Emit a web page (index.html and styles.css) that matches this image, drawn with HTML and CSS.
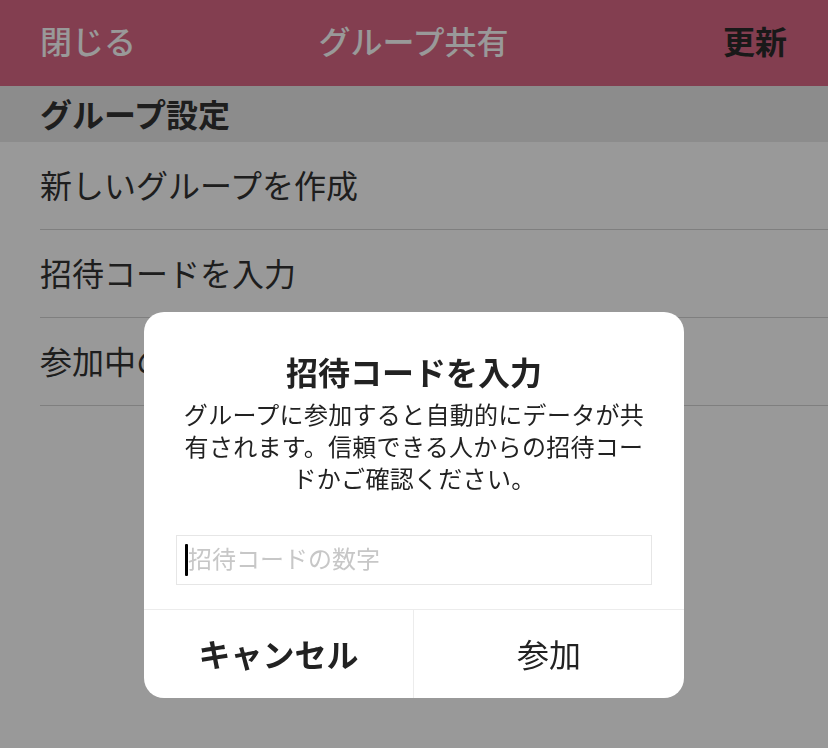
FILE: index.html
```html
<!DOCTYPE html>
<html lang="ja">
<head>
    <meta charset="UTF-8">
    <meta name="viewport" content="width=device-width, initial-scale=1.0">
    <title>グループ共有</title>
    <link rel="stylesheet" href="styles.css">
</head>
<body>
    <header class="nav">
        <span class="nav-close">閉じる</span>
        <span class="nav-title">グループ共有</span>
        <span class="nav-refresh">更新</span>
    </header>

    <div class="section-header">グループ設定</div>
    <ul class="menu">
        <li class="menu-item">新しいグループを作成</li>
        <li class="menu-item">招待コードを入力</li>
        <li class="menu-item">参加中のグループ</li>
    </ul>

    <div class="overlay">
        <div class="alert">
            <h2 class="alert-title">招待コードを入力</h2>
            <p class="alert-message">グループに参加すると自動的にデータが共有されます。信頼できる人からの招待コードかご確認ください。</p>
            <div class="alert-input">
                <span class="caret"></span>
                <span class="placeholder">招待コードの数字</span>
            </div>
            <div class="alert-actions">
                <button class="alert-btn cancel">キャンセル</button>
                <button class="alert-btn">参加</button>
            </div>
        </div>
    </div>
</body>
</html>
```

FILE: styles.css
```css
body {
    font-family: "Noto Sans CJK JP", "Noto Sans", sans-serif;
    margin: 0;
    padding: 0;
    height: 100vh;
    background: #fff;
    color: #333;
    overflow: hidden;
}

.nav {
    height: 86px;
    box-sizing: border-box;
    background: #da6885;
    display: grid;
    grid-template-columns: 1fr auto 1fr;
    align-items: center;
    padding: 0 41px 6px 40px;
    font-size: 32px;
    color: #fff;
}

.nav-close {
    font-weight: 500;
}

.nav-title {
    font-weight: 500;
}

.nav-refresh {
    justify-self: end;
    font-weight: bold;
    color: #2a2a2a;
}

.section-header {
    height: 56px;
    line-height: 54px;
    box-sizing: border-box;
    background: #e9e9e9;
    padding-left: 40px;
    font-size: 32px;
    font-weight: bold;
}

.menu {
    list-style: none;
    margin: 0;
    padding: 0 0 0 40px;
}

.menu-item {
    height: 87px;
    line-height: 85px;
    border-bottom: 1px solid #d4d4d4;
    font-size: 32px;
}

.overlay {
    position: fixed;
    inset: 0;
    background: rgba(0, 0, 0, 0.4);
    display: flex;
    justify-content: center;
    align-items: flex-start;
    padding-top: 312px;
}

.alert {
    width: 540px;
    background: #fff;
    border-radius: 20px;
    overflow: hidden;
    text-align: center;
    color: #222;
}

.alert-title {
    margin: 38px 0 0;
    font-size: 32px;
    line-height: 43px;
    font-weight: bold;
}

.alert-message {
    margin: 5px 36px 0;
    font-size: 24px;
    line-height: 32px;
    letter-spacing: 0.3px;
    line-break: strict;
}

.alert-input {
    margin: 41px 32px 0;
    height: 48px;
    border: 1px solid #e6e6e6;
    display: flex;
    align-items: center;
    padding-left: 8px;
    text-align: left;
}

.caret {
    width: 3px;
    height: 32px;
    background: #000;
    border-radius: 1px;
}

.placeholder {
    font-size: 24px;
    line-height: 28px;
    padding-bottom: 4px;
    color: #c7c7c7;
}

.alert-actions {
    margin-top: 24px;
    display: grid;
    grid-template-columns: 1fr 1fr;
    border-top: 1px solid #ececec;
}

.alert-btn {
    height: 88px;
    border: none;
    background: transparent;
    font-family: inherit;
    font-size: 32px;
    color: #222;
    padding: 0 0 2px;
}

.alert-btn.cancel {
    font-weight: bold;
    border-right: 1px solid #ececec;
}
```
